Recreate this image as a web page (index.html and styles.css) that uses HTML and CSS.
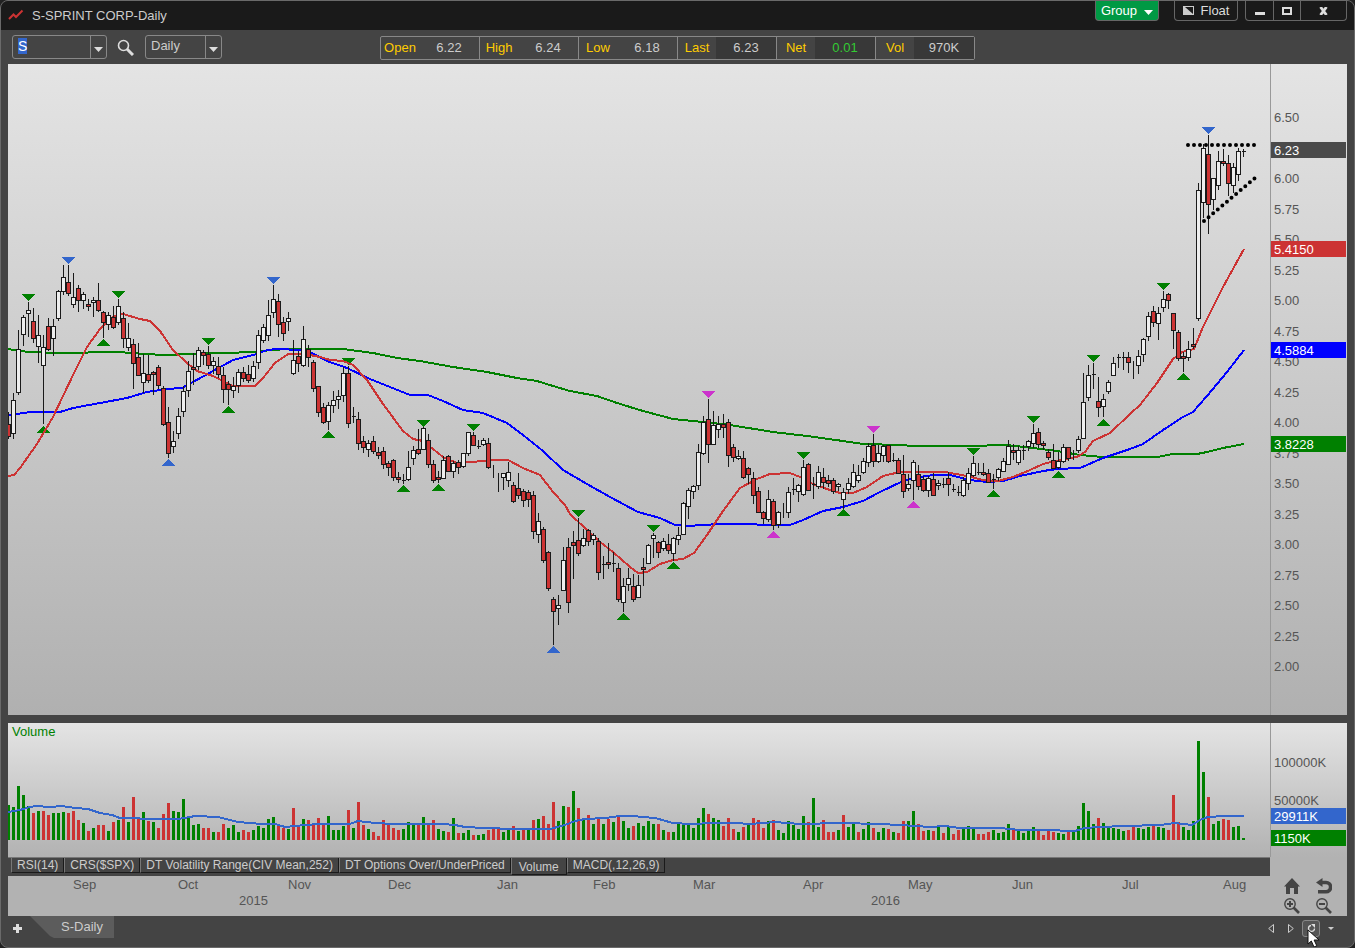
FILE: index.html
```html
<!DOCTYPE html>
<html lang="en">
<head>
  <meta charset="UTF-8">
  <meta name="viewport" content="width=device-width, initial-scale=1.0">
  <title>S-SPRINT CORP-Daily</title>
  <link rel="stylesheet" href="styles.css">
</head>
<body>
  <div class="window">
    <header class="titlebar">
      <svg class="logo" width="16" height="12" viewBox="0 0 16 12"><path d="M1 10 5.500 5.500 8 8 14.500 1.500" fill="none" stroke="#cc3333" stroke-width="2"/></svg>
      <h1>S-SPRINT CORP-Daily</h1>
      <button class="title-btn group-btn">Group
        <svg width="9" height="5" viewBox="0 0 9 5"><path d="M0 0h9L4.500 5z" fill="#fff"/></svg>
      </button>
      <button class="title-btn float-btn">
        <svg width="11" height="9" viewBox="0 0 11 9"><path d="M0 0h11v9H0z" fill="#ccc"/><path d="M2 1h8v7z" fill="#1a1a1a"/></svg>
        Float
      </button>
      <div class="window-btns">
        <button aria-label="Minimize"><svg width="10" height="9" viewBox="0 0 10 9"><path d="M0 6h10v3H0z" fill="#ddd"/></svg></button>
        <button aria-label="Maximize"><svg width="10" height="8" viewBox="0 0 10 8"><path d="M1 1h8v6H1z" fill="none" stroke="#ddd" stroke-width="2"/></svg></button>
        <button class="close-btn" aria-label="Close"><svg width="9" height="8" viewBox="0 0 9 8"><path d="M1.500 0 7.500 8M7.500 0 1.500 8" stroke="#ddd" stroke-width="2.800"/></svg></button>
      </div>
    </header>

    <div class="toolbar">
      <div class="combo symbol-combo">
        <input type="text" id="symbol" value="S" aria-label="Symbol">
        <button aria-label="Symbol list"><svg width="9" height="5" viewBox="0 0 9 5"><path d="M0 0h9L4.500 5z" fill="#ddd"/></svg></button>
      </div>
      <button class="search-btn" aria-label="Search">
        <svg width="17" height="17" viewBox="0 0 17 17"><circle cx="6.500" cy="6.500" r="5" fill="none" stroke="#ddd" stroke-width="1.600"/><path d="M10 10l6 6" stroke="#ddd" stroke-width="3"/></svg>
      </button>
      <div class="combo period-combo">
        <select aria-label="Period">
          <option>Daily</option>
          <option>Weekly</option>
          <option>Monthly</option>
        </select>
        <span class="combo-arrow"><svg width="9" height="5" viewBox="0 0 9 5"><path d="M0 0h9L4.500 5z" fill="#ddd"/></svg></span>
      </div>
      <dl class="quote">
        <div><dt>Open</dt><dd>6.22</dd></div>
        <div><dt>High</dt><dd>6.24</dd></div>
        <div><dt>Low</dt><dd>6.18</dd></div>
        <div><dt>Last</dt><dd class="live">6.23</dd></div>
        <div><dt>Net</dt><dd class="live gain">0.01</dd></div>
        <div><dt>Vol</dt><dd class="live">970K</dd></div>
      </dl>
    </div>

    <main class="charts">
      <section class="price-panel">
        <svg class="plot" id="pricePlot" viewBox="8 64 1262 651" preserveAspectRatio="none"></svg>
        <div class="axis price-axis" id="priceAxis">
          <ol>
            <li>6.50</li>
            <li>6.25</li>
            <li>6.00</li>
            <li>5.75</li>
            <li>5.50</li>
            <li>5.25</li>
            <li>5.00</li>
            <li>4.75</li>
            <li>4.50</li>
            <li>4.25</li>
            <li>4.00</li>
            <li>3.75</li>
            <li>3.50</li>
            <li>3.25</li>
            <li>3.00</li>
            <li>2.75</li>
            <li>2.50</li>
            <li>2.25</li>
            <li>2.00</li>
          </ol>
        </div>
      </section>

      <section class="lower-panel">
        <div class="lower-main">
          <div class="volume">
            <svg class="plot" id="volumePlot" viewBox="8 723 1262 134" preserveAspectRatio="none"></svg>
            <h2>Volume</h2>
          </div>
          <nav class="study-tabs">
            <button>RSI(14)</button>
            <button>CRS($SPX)</button>
            <button>DT Volatility Range(CIV Mean,252)</button>
            <button>DT Options Over/UnderPriced</button>
            <button class="active">Volume</button>
            <button>MACD(,12,26,9)</button>
          </nav>
          <div class="dates">
            <div class="months">
              <span></span><span>Sep</span><span>Oct</span><span>Nov</span><span>Dec</span><span>Jan</span><span>Feb</span><span>Mar</span><span>Apr</span><span>May</span><span>Jun</span><span>Jul</span><span>Aug</span>
            </div>
            <div class="years">
              <span></span><span>2015</span><span>2016</span>
            </div>
          </div>
        </div>
        <div class="lower-side">
          <div class="axis volume-axis" id="volumeAxis">
            <ol>
              <li>100000K</li>
              <li>50000K</li>
            </ol>
          </div>
          <div class="chart-tools">
            <button aria-label="Home"><svg width="16" height="16" viewBox="0 0 16 16"><path d="M8 0l8 8.500h-2V16h-4v-6H6v6H2V8.500H0z" fill="#444"/></svg></button>
            <button aria-label="Undo"><svg width="16" height="16" viewBox="0 0 16 16"><path d="M5 4.500h5a4.300 4.300 0 0 1 0 9.200H2" fill="none" stroke="#444" stroke-width="3.600"/><path d="M0 4.500 6.500 0v9z" fill="#444"/></svg></button>
            <button aria-label="Zoom in"><svg width="16" height="16" viewBox="0 0 16 16"><circle cx="6" cy="6" r="5.200" fill="none" stroke="#444" stroke-width="1.400"/><path d="M3 6h6M6 3v6" stroke="#444" stroke-width="2"/><path d="M9.500 9.500l5.500 5.500" stroke="#444" stroke-width="2.600"/></svg></button>
            <button aria-label="Zoom out"><svg width="16" height="16" viewBox="0 0 16 16"><circle cx="6" cy="6" r="5.200" fill="none" stroke="#444" stroke-width="1.400"/><path d="M3 6h6" stroke="#444" stroke-width="2"/><path d="M9.500 9.500l5.500 5.500" stroke="#444" stroke-width="2.600"/></svg></button>
          </div>
        </div>
      </section>
    </main>

    <footer class="bottombar">
      <button class="add-btn" aria-label="Add tab"><svg width="9" height="9" viewBox="0 0 9 9"><path d="M4.500 0v9M0 4.500h9" stroke="#ddd" stroke-width="3"/></svg></button>
      <button class="page-tab">S-Daily</button>
      <div class="nav-btns">
        <button aria-label="Previous"><svg width="6" height="9" viewBox="0 0 6 9"><path d="M5.500 .5v8L.7 4.500z" fill="none" stroke="#ccc"/></svg></button>
        <button aria-label="Next"><svg width="6" height="9" viewBox="0 0 6 9"><path d="M.5 .5v8l4.800-4z" fill="none" stroke="#ccc"/></svg></button>
        <button class="refresh-btn" aria-label="Refresh">
          <svg width="9" height="9" viewBox="0 0 9 9"><path d="M4 1.500a3 3 0 1 0 3.500 3" fill="none" stroke="#ddd" stroke-width="1.300"/><path d="M4 0h4v4z" fill="#ddd"/></svg>
          <svg class="pointer" width="14" height="19" viewBox="0 0 14 19"><path d="M1 1v14l3.300-3 2.700 6 2.800-1.200-2.700-5.800h5z" fill="#fff" stroke="#111"/></svg>
        </button>
        <button aria-label="More"><svg width="6" height="3" viewBox="0 0 6 3"><path d="M0 0h6L3 3z" fill="#ccc"/></svg></button>
      </div>
    </footer>
  </div>

  <script src="chart.js"></script>
</body>
</html>
```
FILE: chart.js
```js
// One bar every 5 units, starting at the left edge of the plot
const STEP = 5;
const LEFT = 8;
const VOLUME_BASE = 840;

// high, body top, body bottom, low, type (w = up, r = down, l = wick only)
const bars = `
412 424 436 439 r,393 400 433 439 w,330 349 392 395 w,315 317 334 346 w,302 310 313 337 w,
308 321 338 343 r,315 335 346 363 w,335 347 365 424 w,318 326 349 351 r,319 326 338 356 w,
290 291 318 321 w,265 277 291 295 w,265 282 293 296 r,273 297 304 308 w,285 288 300 312 r,
292 294 300 309 w,299 304 306 311 r,297 300 302 317 w,283 300 310 312 r,311 312 322 338 r,
312 315 324 330 w,306 317 327 329 r,299 306 322 325 w,312 318 338 348 r,323 338 347 351 w,
339 344 363 389 r,343 357 375 376 r,354 373 382 393 w,355 374 380 383 r,371 372 374 395 r,
365 367 385 389 r,386 388 424 426 r,407 422 453 458 r,431 441 446 453 w,408 416 433 439 w,
386 391 411 417 w,361 371 390 397 w,353 367 369 385 r,347 350 366 370 w,350 352 355 365 r,
346 354 365 369 r,357 361 365 374 w,357 366 374 378 r,367 375 389 403 r,381 384 389 405 r,
377 386 390 398 w,369 372 385 393 w,367 372 378 382 r,365 374 380 383 r,361 366 378 382 w,
330 335 362 369 w,324 327 340 343 w,300 315 335 341 w,285 299 312 318 w,294 301 324 337 r,
317 322 333 341 r,312 318 321 331 w,340 360 373 375 w,351 356 363 372 r,326 339 365 367 w,
345 349 357 367 r,360 362 388 392 r,386 386 412 417 r,403 407 422 424 r,402 405 421 430 w,
391 400 405 413 w,390 396 399 409 w,367 373 395 402 w,366 373 423 428 r,407 416 416 423 r,
412 419 443 450 r,436 441 447 453 r,440 443 449 457 w,436 441 451 454 r,447 452 455 459 r,
447 451 464 469 r,461 463 467 476 r,459 460 477 481 r,472 477 479 483 r,474 480 480 484 r,
451 467 479 481 w,446 450 458 465 w,429 449 453 455 r,427 428 449 450 w,434 440 464 468 r,
460 464 480 483 r,471 477 479 483 r,456 460 478 479 w,455 456 471 472 r,461 463 471 478 w,
460 462 467 474 r,453 453 466 468 w,432 432 453 456 w,432 435 445 446 r,440 446 446 449 r,
438 440 444 446 w,438 443 467 469 r,465 0 0 478 l,473 0 0 492 l,473 473 477 490 w,
462 472 480 487 w,482 485 501 503 r,473 488 495 499 r,489 491 500 507 r,490 492 499 507 r,
491 495 531 539 r,513 521 534 543 w,527 529 560 563 r,551 552 588 591 r,597 599 611 645 r,
595 605 608 625 w,547 560 590 591 w,538 547 602 613 r,531 542 545 579 r,518 540 553 556 r,
529 538 545 547 w,529 530 541 546 r,533 535 539 545 w,538 541 572 580 r,556 564 564 579 r,
543 562 564 569 r,552 563 563 572 r,563 568 599 602 r,578 586 602 612 w,568 578 584 591 w,
574 586 599 602 r,575 585 597 598 w,558 567 569 586 r,544 545 563 564 w,533 535 538 558 w,
541 542 552 558 r,538 541 548 551 w,534 544 550 554 r,537 538 553 561 w,527 535 539 545 w,
502 503 534 535 w,488 490 506 519 w,485 486 491 499 w,444 452 485 490 w,416 422 453 455 w,
399 419 444 463 r,411 425 444 445 w,416 424 429 438 w,414 424 427 438 r,419 422 455 467 r,
444 447 457 462 r,450 456 458 460 w,451 458 477 479 r,467 468 474 484 r,472 478 495 504 r,
487 491 512 513 r,511 512 518 524 r,490 499 519 522 w,499 501 525 530 r,511 512 524 528 w,
503 0 0 518 l,487 492 512 518 w,478 489 489 495 r,484 485 491 502 w,460 467 494 496 w,
463 464 490 491 r,477 484 484 499 r,466 472 486 489 w,468 477 482 489 r,475 480 483 487 r,
478 480 491 494 r,483 484 486 491 w,488 492 499 509 w,478 483 489 494 w,464 472 486 488 w,
465 475 480 483 w,458 461 472 474 w,443 446 462 467 w,434 445 461 467 r,445 453 461 463 w,
445 446 455 462 w,445 445 461 463 r,453 460 460 462 r,458 460 473 474 r,455 474 491 498 r,
474 484 488 491 w,460 462 480 500 w,465 474 486 490 r,476 479 490 492 r,476 478 490 497 w,
473 479 495 496 r,480 483 485 490 w,478 484 484 488 r,472 478 484 496 r,484 489 489 492 r,
486 492 492 496 r,477 480 495 497 w,468 473 483 490 w,456 463 475 477 w,463 472 472 475 r,
463 472 474 476 r,469 473 482 483 r,474 479 479 489 r,468 469 477 481 w,458 461 471 472 w,
440 446 464 465 w,444 450 452 460 r,446 450 462 465 w,445 450 450 460 r,440 441 446 451 w,
424 433 443 448 w,428 432 444 448 r,441 443 445 450 r,449 452 457 460 r,444 460 468 469 r,
452 461 467 469 w,444 447 461 463 w,447 447 458 461 r,450 0 0 460 l,436 439 450 453 w,
373 402 438 439 w,365 375 397 401 w,363 374 374 389 r,377 401 407 417 r,394 399 406 417 w,
380 382 391 394 w,357 363 375 376 w,354 357 357 368 r,352 357 357 370 r,352 357 362 373 r,
361 0 0 379 l,350 356 365 374 w,338 339 354 362 w,312 316 336 341 w,306 311 322 327 r,
307 313 323 340 w,291 299 307 312 w,293 294 300 309 r,313 313 330 349 r,330 332 358 361 r,
352 356 358 372 r,341 349 357 361 w,328 344 346 349 r,183 190 318 321 w,144 148 202 218 w,
135 154 204 234 r,178 178 199 210 w,151 161 185 190 w,149 161 163 166 r,155 163 183 196 r,
163 167 185 193 w,148 151 174 181 w,149 151 151 157 r`.split(',').map(row => row.trim().split(' '));

// Bar height followed by its colour
const volumes = `
35g 33g 54g 45g 34g 27r 29g 29r 25r 27g 27g 28g 27r 29r 20r 17g 9r 12g 15r 15r 9g 18r 20g 33r 18g
43r 23r 28g 19r 18g 12r 26r 37r 29g 28g 41g 23g 15g 16g 12r 12r 8g 8r 16r 12g 15g 8g 10r 8r 10g
14g 12g 21g 23g 16r 12r 11g 32r 14r 21g 20r 15r 22r 16r 24g 10g 10g 14g 30r 12g 38r 15r 11g 8r 4r
20r 17r 12r 10r 11g 18g 15g 16r 23g 16r 20r 11g 9g 8r 22g 7r 7g 10g 5r 5g 6g 10r 12r 12r 8g
12g 14r 9g 10r 10g 20r 21g 24r 16r 38r 19g 34g 33r 49g 32r 21g 25r 16g 21r 16g 21r 18g 23r 19g 12g
14r 17g 14g 19g 16g 16r 10g 8r 8g 18g 16g 15g 12g 22g 32g 26r 22g 20g 14r 22r 11r 8g 13r 16g 22r
20r 12r 19g 20r 10g 7g 19g 15g 11g 24g 18r 42g 13g 20r 8r 8r 10g 25r 13g 18g 8r 11g 18g 12r 8g
12g 11r 8g 7r 19r 19g 29g 16r 9r 10g 9r 13g 7r 14g 6r 10r 12g 14g 12g 6r 6r 8r 10g 7g 8g
16g 10r 9g 7g 9g 13g 9r 5r 9r 8r 7g 6g 8r 9g 14g 37g 29g 16g 22r 17g 13g 12g 11g 9g 10r
13r 12g 11g 13g 14r 13g 12g 10r 45r 18r 13g 10g 19g 99g 68g 43r 16g 19g 21r 20r 13g 14g 2g`.trim().split(/\s+/);

const averages = {
  long: '8,349 28,352 58,353 118,352 145,354 165,355 190,354 220,353 258,352 270,350 290,349 343,349 373,353 397,358 420,361 453,367 487,372 517,378 537,381 553,386 570,391 597,396 617,403 643,411 673,419 703,422 730,425 773,432 807,436 843,441 863,444 900,445 913,446 968,446 1007,445 1033,448 1057,451 1080,455 1103,457 1157,457 1173,454 1197,454 1207,452 1223,448 1244,444',
  mid: '8,415 17,414 30,412 60,412 73,408 100,403 127,398 147,392 167,389 182,388 193,382 213,371 233,360 257,354 267,350 277,349 300,350 310,352 327,361 347,368 370,379 390,387 410,395 428,395 443,401 463,410 483,413 507,423 523,435 543,451 563,470 587,484 610,497 638,512 660,518 675,525 687,526 703,525 720,524 750,524 763,525 790,525 803,520 823,511 843,507 863,501 880,492 903,481 920,477 933,475 950,475 970,480 987,482 1003,481 1020,476 1043,471 1057,469 1080,468 1103,458 1130,449 1143,444 1163,430 1183,417 1193,412 1207,396 1227,372 1244,350',
  short: '8,476 14,475 20,468 37,444 53,417 63,396 75,371 87,347 100,329 113,317 123,314 140,319 150,321 160,331 173,350 187,363 197,371 213,376 233,386 255,386 263,378 275,363 288,354 305,354 320,357 330,360 343,361 353,365 367,380 383,404 403,431 413,439 423,441 443,457 457,463 473,462 490,460 508,460 523,468 540,475 553,492 565,505 570,514 587,530 600,542 613,552 630,567 638,573 647,572 660,564 673,560 683,559 694,553 707,535 723,511 740,488 757,479 770,474 790,473 800,477 813,484 827,489 840,493 853,493 867,487 883,476 900,472 945,472 967,476 983,480 998,481 1013,477 1030,470 1043,464 1060,460 1077,457 1085,452 1093,441 1110,433 1130,414 1140,405 1157,383 1173,359 1182,352 1194,349 1203,327 1223,287 1244,249',
  volume: '8,812 20,810 30,807 36,806 50,807 62,806 75,808 88,809 100,813 112,815 120,818 160,819 178,819 190,817 195,816 218,817 238,822 262,824 275,824 285,827 305,825 320,824 350,824 358,821 375,823 395,824 442,824 455,825 465,827 485,828 515,829 550,829 565,825 575,821 585,819 605,818 620,816 632,816 655,818 673,823 690,824 715,823 735,823 750,824 775,822 800,824 840,823 880,824 900,825 930,827 945,826 960,828 1000,828 1020,830 1045,830 1075,831 1085,828 1100,827 1125,826 1160,825 1175,823 1192,825 1200,820 1208,817 1225,816 1244,816'
};

// Swing points: x, top, colour
const highs = [
  [28, 294, 'minor'], [68, 257, 'major'], [118, 291, 'minor'], [208, 338, 'minor'], [273, 277, 'major'],
  [348, 358, 'minor'], [423, 420, 'minor'], [473, 424, 'minor'], [578, 510, 'minor'], [653, 525, 'minor'],
  [708, 391, 'medium'], [803, 452, 'minor'], [873, 426, 'medium'], [973, 448, 'minor'], [1033, 416, 'minor'],
  [1093, 355, 'minor'], [1163, 283, 'minor'], [1208, 127, 'major']
];
const lows = [
  [43, 426, 'minor'], [103, 339, 'minor'], [168, 459, 'major'], [228, 406, 'minor'], [328, 431, 'minor'],
  [403, 485, 'minor'], [438, 484, 'minor'], [553, 646, 'major'], [623, 613, 'minor'], [673, 562, 'minor'],
  [773, 531, 'medium'], [843, 509, 'minor'], [913, 501, 'medium'], [993, 490, 'minor'], [1058, 471, 'minor'],
  [1103, 419, 'minor'], [1183, 373, 'minor']
];

const line = (name) => `<polyline class="line ${name}" points="${averages[name]}"/>`;

// Price plot
const drawPrices = () => {
  let wicks = '', up = '', down = '';

  bars.forEach(([high, top, bottom, low, type], i) => {
    const x = LEFT + i * STEP;
    wicks += `M${x + 0.5} ${high}V${low}`;
    if (type === 'l') return;
    const body = `M${x - 1.5} ${+top + 0.5}h4v${bottom - top}h-4z`;
    if (type === 'w') up += body;
    else down += body;
  });

  const markers = highs.map(([x, y, kind]) => `<path class="${kind}" d="M${x - 6} ${y}h13l-6.500 7z"/>`)
    .concat(lows.map(([x, y, kind]) => `<path class="${kind}" d="M${x - 6} ${y + 7}h13l-6.500 -7z"/>`));

  document.getElementById('pricePlot').innerHTML = `
    ${markers.join('')}
    ${line('long')}${line('mid')}${line('short')}
    <path class="wick" d="${wicks}"/>
    <path class="candle up" d="${up}"/>
    <path class="candle down" d="${down}"/>
    <path class="trend" d="M1188 145H1255"/>
    <path class="trend" d="M1204 221L1255 178"/>`;
};

// Volume plot
const drawVolumes = () => {
  const rects = volumes.map((v, i) => {
    const height = parseInt(v);
    const kind = v.endsWith('g') ? 'gain' : 'loss';
    return `<rect class="${kind}" x="${LEFT + i * STEP - 1}" y="${VOLUME_BASE - height}" width="3" height="${height}"/>`;
  });
  document.getElementById('volumePlot').innerHTML = rects.join('') + line('volume');
};

// Value tags on the right axes, placed as a share of the axis height
const addTag = (axisId, text, share, kind) => {
  const tag = document.createElement('span');
  tag.className = `tag ${kind}`;
  tag.textContent = text;
  tag.style.top = `${share * 100}%`;
  document.getElementById(axisId).appendChild(tag);
};
const priceShare = (price) => (602 - (price - 2) * 122) / 651;
const volumeShare = (volume) => (116 - volume * 0.00076) / 134;

drawPrices();
drawVolumes();
addTag('priceAxis', '6.23', priceShare(6.23), 'last');
addTag('priceAxis', '5.4150', priceShare(5.415), 'short');
addTag('priceAxis', '4.5884', priceShare(4.5884), 'mid');
addTag('priceAxis', '3.8228', priceShare(3.8228), 'long');
addTag('volumeAxis', '29911K', volumeShare(29911), 'average');
addTag('volumeAxis', '1150K', volumeShare(1150), 'long');

document.getElementById('symbol').select();
```
FILE: styles.css
```css
/* Basic Reset */
* {
  margin: 0;
  padding: 0;
  box-sizing: border-box;
}

body {
  font-family: "Liberation Sans", Arial, sans-serif;
  font-size: 13px;
  line-height: 16px;
  background-color: #222;
  color: #ccc;
}

button,
input,
select {
  font: inherit;
  color: inherit;
  background: none;
  border: none;
  outline: none;
}

button {
  display: flex;
  align-items: center;
  justify-content: center;
  cursor: pointer;
}

svg {
  display: block;
}

.window {
  display: flex;
  flex-direction: column;
  height: 100vh;
  min-height: 500px;
  background-color: #444;
  border: 1px solid #6a6a6a;
  border-radius: 8px;
  overflow: hidden;
}

/* Title bar */
.titlebar {
  display: flex;
  align-items: flex-start;
  height: 29px;
  padding: 0 7px;
  background-color: #1a1a1a;
}

.logo {
  margin-top: 8px;
}

.titlebar h1 {
  flex: 1;
  margin: 7px 0 0 8px;
  font-size: 13px;
  font-weight: normal;
}

.title-btn {
  height: 20px;
  width: 64px;
  gap: 7px;
  border: 1px solid #666;
  border-top: none;
  border-radius: 0 0 4px 4px;
  color: #ddd;
}

.group-btn {
  background-color: #009944;
  color: #fff;
}

.group-btn svg {
  margin-top: 4px;
}

.float-btn {
  margin: 0 7px 0 15px;
}

.window-btns {
  display: flex;
  height: 20px;
  border: 1px solid #666;
  border-top: none;
  border-radius: 0 0 4px 4px;
}

.window-btns button {
  width: 27px;
}

.window-btns button + button {
  border-left: 1px solid #666;
}

.window-btns .close-btn {
  width: 46px;
}

/* Toolbar */
.toolbar {
  display: flex;
  align-items: center;
  height: 34px;
  padding: 0 11px;
}

.combo {
  display: flex;
  height: 24px;
  border: 1px solid #888;
  border-radius: 3px;
}

.symbol-combo {
  width: 95px;
}

.period-combo {
  width: 77px;
}

.combo input,
.combo select {
  flex: 1;
  min-width: 0;
  padding: 0 0 2px 5px;
  appearance: none;
}

.combo input {
  font-size: 14px;
}

.combo input::selection {
  background-color: #3366cc;
  color: #fff;
}

.combo button,
.combo-arrow {
  display: flex;
  align-items: center;
  justify-content: center;
  width: 16px;
  padding-top: 4px;
  border-left: 1px solid #888;
}

.search-btn {
  width: 36px;
  margin-right: 2px;
}

.quote {
  display: flex;
  margin: 1px 0 0 158px;
  border: 1px solid #888;
  border-radius: 2px;
}

.quote div {
  display: flex;
  flex: 0 0 99px;
  line-height: 22px;
  text-align: center;
}

.quote div:first-child {
  flex-basis: 98px;
}

.quote div + div {
  border-left: 1px solid #888;
}

.quote dt {
  width: 38px;
  color: #ffcc00;
}

.quote dd {
  flex: 1;
}

.quote .live {
  background-color: #383838;
}

.quote .gain {
  color: #33cc33;
}

/* Charts */
.charts {
  flex: 1;
  display: flex;
  flex-direction: column;
  gap: 8px;
  min-height: 0;
  padding: 0 7px;
}

.price-panel {
  flex: 1;
  display: grid;
  grid-template-columns: minmax(0, 1fr) 77px;
  min-height: 0;
  background: linear-gradient(#e4e4e4, #b0b0b0);
}

.plot {
  width: 100%;
  height: 100%;
  min-height: 0;
  shape-rendering: crispEdges;
}

.axis {
  position: relative;
  border-left: 1px solid #999;
  color: #555;
}

.axis ol {
  display: flex;
  flex-direction: column;
  list-style: none;
  padding-left: 3px;
}

.price-axis ol {
  height: 100%;
  justify-content: space-between;
  padding-top: 46px;
  padding-bottom: 40px;
}

.volume-axis {
  flex: 1;
}

.volume-axis ol {
  gap: 22px;
  padding-top: 32px;
}

.tag {
  position: absolute;
  left: 0;
  right: 1px;
  padding: 1px 0 0 3px;
  line-height: 15px;
  color: #fff;
  transform: translateY(-50%);
}

.tag.last {
  background-color: #4a4a4a;
}

.tag.short {
  background-color: #cc3333;
}

.tag.mid {
  background-color: #0000ff;
}

.tag.long {
  background-color: #008000;
}

.tag.average {
  background-color: #3366cc;
}

/* Plot shapes */
.line {
  fill: none;
  stroke-width: 2;
}

.line.long {
  stroke: #008000;
}

.line.mid {
  stroke: #0000ff;
}

.line.short {
  stroke: #cc3333;
}

.line.volume {
  stroke: #3366cc;
}

.wick,
.candle {
  stroke: #1a1a1a;
}

.candle.up {
  fill: #eee;
}

.candle.down {
  fill: #cc3333;
}

/* Zero-length dashes with round caps give dots */
.trend {
  stroke: #000;
  stroke-width: 4;
  stroke-linecap: round;
  stroke-dasharray: 0 6;
  shape-rendering: auto;
}

.minor,
.plot .gain {
  fill: #008000;
}

.major {
  fill: #3366cc;
}

.medium {
  fill: #cc33cc;
}

.plot .loss {
  fill: #cc3333;
}

/* Volume, tabs and dates */
.lower-panel {
  display: grid;
  grid-template-columns: minmax(0, 1fr) 77px;
  height: 193px;
  background: linear-gradient(#e4e4e4, #b2b2b2 134px);
}

.lower-main {
  display: flex;
  flex-direction: column;
}

.volume {
  position: relative;
  height: 134px;
}

.volume h2 {
  position: absolute;
  top: 1px;
  left: 4px;
  font-size: 13px;
  font-weight: normal;
  color: #008000;
}

.study-tabs {
  display: flex;
  align-items: flex-start;
  height: 19px;
  padding-left: 3px;
  background-color: #444;
  border-top: 1px solid #777;
}

.study-tabs button {
  height: 15px;
  padding: 0 5px;
  font-size: 12px;
  line-height: 14px;
  white-space: nowrap;
  border-left: 1px solid #777;
  border-right: 1px solid #1a1a1a;
  border-bottom: 1px solid #1a1a1a;
}

.study-tabs .active {
  height: 17px;
  padding: 2px 7px 0;
}

.dates {
  flex: 1;
  padding-top: 1px;
}

.months,
.years {
  display: grid;
  color: #555;
}

.months {
  grid-template-columns: 65fr 105fr 110fr 100fr 109fr 96fr 100fr 110fr 105fr 104fr 110fr 101fr 47fr;
}

.years {
  grid-template-columns: 231fr 632fr 399fr;
}

.lower-side {
  display: flex;
  flex-direction: column;
}

.volume-axis {
  max-height: 153px;
}

.volume-axis {
  flex: 0 0 134px;
}

.chart-tools {
  display: grid;
  grid-template-columns: 32px 32px;
  gap: 4px 0;
  justify-content: center;
  padding: 21px 2px 0 0;
}

/* Bottom bar */
.bottombar {
  display: flex;
  align-items: flex-start;
  height: 31px;
  padding: 0 13px 0 7px;
}

.add-btn {
  width: 18px;
  height: 24px;
}

.page-tab {
  width: 84px;
  height: 22px;
  padding-left: 20px;
  margin-left: 4px;
  background-color: #5c5c5c;
  clip-path: polygon(0 0, 100% 0, 100% 100%, 24px 100%, 20px 20px);
}

.nav-btns {
  display: flex;
  margin: 4px 0 0 auto;
}

.nav-btns button {
  width: 20px;
  height: 17px;
}

.nav-btns .refresh-btn {
  position: relative;
  width: 18px;
  margin: 0 1px;
  border: 1px solid #888;
  border-radius: 3px;
  background-color: #555;
}

.pointer {
  position: absolute;
  top: 8px;
  left: 4px;
}
```
